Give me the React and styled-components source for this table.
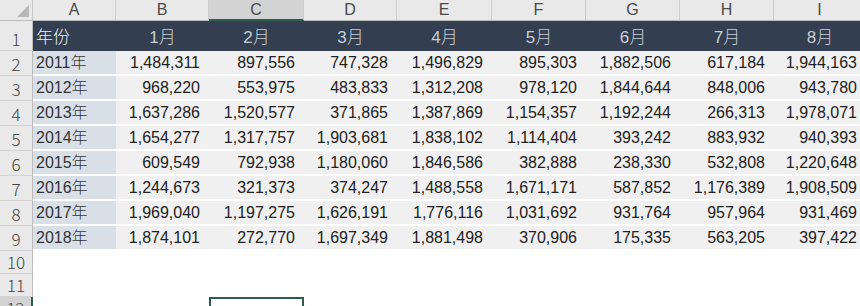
import React from "react";
import styled, { createGlobalStyle, css } from "styled-components";

const GlobalStyle = createGlobalStyle`
  html, body {
    margin: 0;
    padding: 0;
    background: #ffffff;
    overflow: hidden;
  }
`;

const columns = ["A", "B", "C", "D", "E", "F", "G", "H", "I"];
const months = ["1月", "2月", "3月", "4月", "5月", "6月", "7月", "8月"];

const tableData = [
  ["2011年", "1,484,311", "897,556", "747,328", "1,496,829", "895,303", "1,882,506", "617,184", "1,944,163"],
  ["2012年", "968,220", "553,975", "483,833", "1,312,208", "978,120", "1,844,644", "848,006", "943,780"],
  ["2013年", "1,637,286", "1,520,577", "371,865", "1,387,869", "1,154,357", "1,192,244", "266,313", "1,978,071"],
  ["2014年", "1,654,277", "1,317,757", "1,903,681", "1,838,102", "1,114,404", "393,242", "883,932", "940,393"],
  ["2015年", "609,549", "792,938", "1,180,060", "1,846,586", "382,888", "238,330", "532,808", "1,220,648"],
  ["2016年", "1,244,673", "321,373", "374,247", "1,488,558", "1,671,171", "587,852", "1,176,389", "1,908,509"],
  ["2017年", "1,969,040", "1,197,275", "1,626,191", "1,776,116", "1,031,692", "931,764", "957,964", "931,469"],
  ["2018年", "1,874,101", "272,770", "1,697,349", "1,881,498", "370,906", "175,335", "563,205", "397,422"],
];

const Sheet = styled.div`
  display: grid;
  grid-template-columns: 33px 83px 93px 95px 93px 95px 94px 94px 94px 92px;
  grid-template-rows: 21px 30px repeat(8, 25px) 23px 23px 23px;
  width: 860px;
  height: 306px;
  overflow: hidden;
  font-family: "Liberation Sans", "Noto Sans CJK SC", Arial, sans-serif;
`;

const Corner = styled.div`
  position: relative;
  background: #e9e9e9;
  border-right: 1px solid #c9c9c9;
  border-bottom: 1px solid #bcbcbc;
  box-sizing: border-box;

  &::after {
    content: "";
    position: absolute;
    right: 3px;
    bottom: 3px;
    width: 0;
    height: 0;
    border-left: 12px solid transparent;
    border-bottom: 12px solid #b8b8b8;
  }
`;

const ColHead = styled.div`
  display: flex;
  align-items: center;
  justify-content: center;
  box-sizing: border-box;
  background: ${(p) => (p.$active ? "#d3d3d3" : "#e9e9e9")};
  border-right: 1px solid #cdcdcd;
  border-bottom: ${(p) => (p.$active ? "2px solid #2b5f4a" : "1px solid #bcbcbc")};
  color: #4a4a4a;
  font-family: "Liberation Sans", Arial, sans-serif;
  font-size: 16px;
  line-height: 1;
`;

const RowHead = styled.div`
  display: flex;
  align-items: flex-end;
  justify-content: center;
  box-sizing: border-box;
  background: ${(p) => (p.$active ? "#d3d3d3" : "#e9e9e9")};
  border-right: ${(p) => (p.$active ? "2px solid #2b5f4a" : "1px solid #bcbcbc")};
  border-bottom: 1px solid #d2d2d2;
  color: #444;
  font-family: "Noto Sans CJK SC", "Liberation Sans", sans-serif;
  font-weight: 300;
  font-size: 17px;
  line-height: 1;
  padding-bottom: 3px;
`;

const Cell = styled.div`
  display: flex;
  align-items: center;
  box-sizing: border-box;
  font-size: 16px;
  line-height: 1;
  white-space: nowrap;
  overflow: hidden;

  ${(p) =>
    p.$kind === "title" &&
    css`
      background: #333f50;
      color: #eef0f3;
      justify-content: flex-start;
      padding: 2px 0 0 3px;
      font-size: 17px;
      font-weight: 300;
    `}
  ${(p) =>
    p.$kind === "month" &&
    css`
      background: #333f50;
      color: #c9ced6;
      justify-content: center;
      padding-top: 2px;
      font-size: 17px;
      font-weight: 300;
    `}
  ${(p) =>
    p.$kind === "year" &&
    css`
      background: #d9dfe7;
      color: #333;
      justify-content: flex-start;
      padding-left: 3px;
      font-weight: 300;
      border-bottom: 2px solid #ffffff;
    `}
  ${(p) =>
    p.$kind === "number" &&
    css`
      background: #f0f0f0;
      color: #222;
      justify-content: flex-end;
      padding-right: 9px;
      border-bottom: 2px solid #ffffff;
    `}
  ${(p) =>
    p.$kind === "empty" &&
    css`
      background: #ffffff;
    `}
  ${(p) =>
    p.$selected &&
    css`
      border: 2px solid #2b5f4a;
      border-bottom: none;
    `}
`;

const App = () => {
  return (
    <>
      <GlobalStyle />
      <Sheet>
        <Corner />
        {columns.map((c) => (
          <ColHead key={c} $active={c === "C"}>
            {c}
          </ColHead>
        ))}

        <RowHead>1</RowHead>
        <Cell $kind="title">年份</Cell>
        {months.map((m) => (
          <Cell key={m} $kind="month">
            {m}
          </Cell>
        ))}

        {tableData.map((row, r) => (
          <React.Fragment key={row[0]}>
            <RowHead>{r + 2}</RowHead>
            {row.map((v, i) => (
              <Cell key={i} $kind={i === 0 ? "year" : "number"}>
                {v}
              </Cell>
            ))}
          </React.Fragment>
        ))}

        {[10, 11, 12].map((n) => (
          <React.Fragment key={n}>
            <RowHead $active={n === 12}>{n}</RowHead>
            {columns.map((c) => (
              <Cell key={c} $kind="empty" $selected={n === 12 && c === "C"} />
            ))}
          </React.Fragment>
        ))}
      </Sheet>
    </>
  );
};

export default App;
